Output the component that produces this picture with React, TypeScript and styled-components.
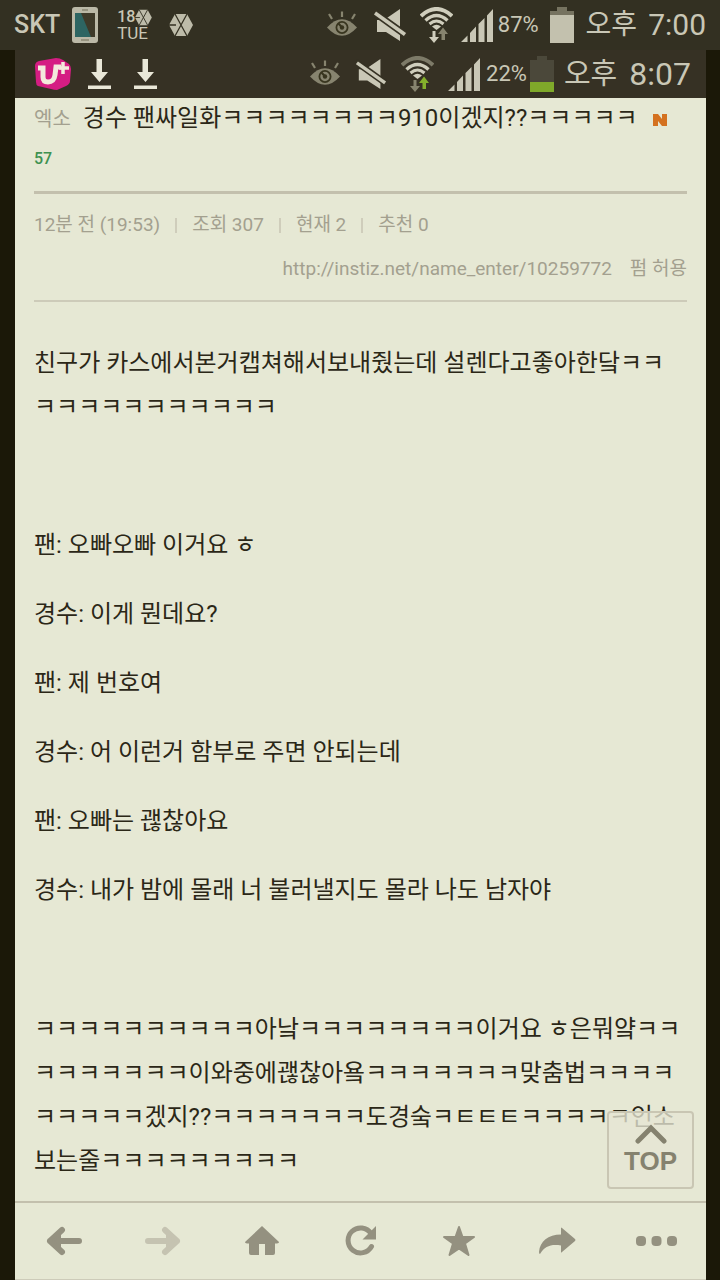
import React from "react";
import styled, { createGlobalStyle } from "styled-components";

const ink = "#2b2717";
const muted = "#a3a08f";
const rule = "#c3c0ad";
const paper = "#e6e8d4";
const iconGrey = "#949180";

const GlobalStyle = createGlobalStyle`
  *, *::before, *::after { box-sizing: border-box; }
  html { background: #1b1808; }
  body {
    margin: 0;
    font-family: Roboto, "Noto Sans CJK KR", sans-serif;
    color: ${ink};
  }
  h1, p { margin: 0; font-weight: 400; }
`;

const Screen = styled.div`
  min-height: 100vh;
  display: flex;
  flex-direction: column;
`;

const StatusBar = styled.header<{ $tone: string; $height: number }>`
  display: flex;
  align-items: center;
  justify-content: space-between;
  height: ${(p) => p.$height}px;
  background: ${(p) => p.$tone};
  color: #c9c7b6;
`;

const Cluster = styled.div`
  display: flex;
  align-items: center;
`;

const Slot = styled.span<{ $before?: number }>`
  display: flex;
  flex: none;
  margin-left: ${(p) => p.$before ?? 0}px;
`;

const Label = styled.span<{ $size: number; $before?: number; $weight?: number }>`
  flex: none;
  font-size: ${(p) => p.$size}px;
  line-height: 36px;
  font-weight: ${(p) => p.$weight ?? 400};
  margin-left: ${(p) => p.$before ?? 0}px;
  white-space: nowrap;
`;

const DateBadge = styled.div`
  display: flex;
  flex-direction: column;
  width: 35px;
  margin-left: 19px;
  font-size: 17px;
  line-height: 16px;
`;

const DateTop = styled.span`
  display: flex;
  align-items: center;
  height: 16px;
  font-size: 16px;
  font-weight: 500;
`;

const Frame = styled.div`
  flex: 1;
  display: flex;
  flex-direction: column;
  margin: 0 14px 0 15px;
  background: ${paper};
`;

const Article = styled.main`
  position: relative;
  flex: 1;
  padding: 0 19px 18px;
`;

const TitleBlock = styled.div`
  padding-bottom: 12px;
  border-bottom: 3px solid ${rule};
`;

const Title = styled.h1`
  font-size: 24px;
  line-height: 40px;
  word-break: break-all;
`;

const Category = styled.span`
  font-size: 20px;
  color: ${muted};
  margin-right: 12px;
`;

const NewMark = styled.svg`
  margin-left: 15px;
`;

const CommentCount = styled.p`
  font-size: 16px;
  line-height: 40px;
  font-weight: 500;
  color: #3f9251;
`;

const Meta = styled.div`
  padding: 9px 0;
  border-bottom: 2px solid #cdcbb9;
  font-size: 19px;
  line-height: 44px;
  color: ${muted};
`;

const MetaRow = styled.div<{ $end?: boolean }>`
  display: flex;
  align-items: center;
  justify-content: ${(p) => (p.$end ? "flex-end" : "flex-start")};
  gap: ${(p) => (p.$end ? 18 : 15)}px;
`;

const Divider = styled.span`
  width: 2px;
  height: 15px;
  background: #cfcdbb;
`;

const SourceLink = styled.a`
  color: inherit;
  text-decoration: none;
`;

const Body = styled.div`
  padding: 39px 4px 0 0;
  font-size: 24px;
  line-height: 44px;
`;

const Paragraph = styled.p`
  word-break: break-all;
`;

const Dialogue = styled.div`
  display: flex;
  flex-direction: column;
  gap: 25px;
  margin: 94px 0 95px;
`;

const TopButton = styled.button`
  position: absolute;
  right: 12px;
  bottom: 12px;
  width: 87px;
  height: 78px;
  padding: 0;
  display: flex;
  flex-direction: column;
  align-items: center;
  justify-content: center;
  gap: 2px;
  background: rgba(230, 230, 211, 0.78);
  border: 2px solid #c9c6b3;
  border-radius: 4px;
  color: #85826f;
  font: 700 26px/30px "Liberation Sans", sans-serif;
`;

const Toolbar = styled.nav`
  display: flex;
  height: 79px;
  border-top: 2px solid ${rule};
  border-bottom: 1px solid #cdcbb9;
`;

const ToolButton = styled.button<{ $faded?: boolean }>`
  flex: 1;
  display: flex;
  align-items: center;
  justify-content: center;
  padding: 0;
  border: 0;
  background: none;
  color: ${(p) => (p.$faded ? "#c5c3b1" : iconGrey)};
`;

const Eye = ({ size }: { size: number }) => (
  <svg width={size} height={size} viewBox="0 0 30 30" aria-hidden="true">
    <path d="M0 17.500Q15 1 30 17.500Q15 34 0 17.500Z" fill="#87846f" />
    <circle cx="15" cy="17.500" r="5.600" fill="#87846f" stroke="#38351f" strokeWidth="1.800" />
    <circle cx="15" cy="17.500" r="2.200" fill="#38351f" />
    <path d="M15 17.500L11.500 13.500" stroke="#38351f" strokeWidth="2" />
    <path d="M15 1.500V7M2 4L5 9M28 4L25 9" stroke="#87846f" strokeWidth="2.200" />
  </svg>
);

const Mute = ({ size }: { size: number }) => (
  <svg width={size} height={size} viewBox="0 0 33 33" aria-hidden="true">
    <path d="M3 11H10L26 0V32L12 23H3Z" fill="#c9c7b6" />
    <path d="M-1 2.500L33 26.800" stroke="#353123" strokeWidth="7" />
    <path d="M1 4L31 25.500" stroke="#c9c7b6" strokeWidth="3.600" />
  </svg>
);

const Wifi = ({ dim, down, up }: { dim: string; down: string; up: string }) => (
  <svg width="33" height="36" viewBox="0 0 33 36" fill="none" aria-hidden="true">
    <path d="M1 9Q16.500 -5 32 9" stroke={dim} strokeWidth="4" />
    <path d="M5.500 13.500Q16.500 3.500 27.500 13.500" stroke="#d0cebd" strokeWidth="3.400" />
    <path d="M9.500 17Q16.500 11 23.500 17" stroke="#d0cebd" strokeWidth="3" />
    <path d="M12 19.500Q16.500 16 21 19.500L16.500 23Z" fill="#d0cebd" />
    <path d="M12.500 24H15.500V30H19L14 36L9 30H12.500Z" fill={down} />
    <path d="M21.500 33V27H18L23 20.500L28 27H25V33Z" fill={up} />
  </svg>
);

const Signal = () => (
  <svg width="32" height="33" viewBox="0 0 32 33" fill="#c9c7b6" aria-hidden="true">
    <path d="M0 33L6.500 26.500V33ZM9 24L15 17.500V33H9ZM17.500 15L23.500 9V33H17.500ZM26 6.500L32 0V33H26Z" />
  </svg>
);

const Battery = ({ shell, fill, level }: { shell: string; fill: string; level: number }) => (
  <svg width="24" height="36" viewBox="0 0 24 36" aria-hidden="true">
    <path d="M7 0H17V4H24V36H0V4H7Z" fill={shell} />
    <rect y={36 - level} width="24" height={level} fill={fill} />
  </svg>
);

const Hexagon = ({ width, height }: { width: number; height: number }) => (
  <svg width={width} height={height} viewBox="0 0 24 24" aria-hidden="true">
    <path d="M6 1H18L24 12L18 23H6L0 12Z" fill="#bdbba9" />
    <path d="M6 1L18 23M18 1L6 23M0 12H7" stroke="#333022" strokeWidth="1.300" />
  </svg>
);

const Phone = () => (
  <svg width="26" height="36" viewBox="0 0 26 36" aria-hidden="true">
    <rect width="26" height="36" rx="3" fill="#bbb9a7" />
    <rect x="3" y="6" width="20" height="24" fill="#3e3a29" />
    <path d="M3 6H9L19 30H3Z" fill="#2d6562" />
    <path d="M10 3H16M9 33H17" stroke="#96937f" strokeWidth="2" />
  </svg>
);

const Carrier = () => (
  <svg width="36" height="32" viewBox="0 0 36 32" aria-hidden="true">
    <path d="M4 3L21 0Q25 0 28 2L34 6Q36 8 36 11L35 23Q35 26 31 28L22 32Q19 32 16 31L3 28Q1 27 1 24L0 8Q0 4 4 3Z" fill="#d51d83" />
    <path d="M3 10H8V19Q8 24 13 24Q19 24 20 17L21 9H26" fill="none" stroke="#f3e9dc" strokeWidth="5" />
    <path d="M28 4V16M24 10H34" stroke="#f3e9dc" strokeWidth="3.500" />
  </svg>
);

const Download = () => (
  <svg width="23" height="30" viewBox="0 0 23 30" fill="#e9e7d8" aria-hidden="true">
    <path d="M8.500 0H14V13H20L11.500 23L3 13H8.500ZM0 26.500H23V30H0Z" />
  </svg>
);

const Arrow = ({ forward }: { forward?: boolean }) => (
  <svg width="36" height="30" viewBox="0 0 36 30" fill="none" stroke="currentColor" strokeWidth="6" strokeLinecap="round" strokeLinejoin="round" aria-hidden="true">
    <path d={forward ? "M3 15H32M20 4L32 15L20 26" : "M33 15H4M16 4L4 15L16 26"} />
    <path d={forward ? "M22 9L29 15L22 21Z" : "M14 9L7 15L14 21Z"} strokeWidth="2" fill="currentColor" />
  </svg>
);

const Home = () => (
  <svg width="34" height="30" viewBox="0 0 34 30" fill="currentColor" aria-hidden="true">
    <path d="M17 0L34 16Q34 17.500 30 17.500V27Q30 29 28 29H20V18H14V29H6Q4 29 4 27V17.500Q0 17.500 0 16Z" />
  </svg>
);

const Reload = () => (
  <svg width="32" height="32" viewBox="0 0 32 32" aria-hidden="true">
    <path d="M26 8.500A12.500 12.500 0 1 0 26.500 21.500" fill="none" stroke="currentColor" strokeWidth="5" strokeLinecap="round" />
    <path d="M31 1V14.500H17.500Z" fill="currentColor" />
  </svg>
);

const Star = () => (
  <svg width="32" height="32" viewBox="0 0 32 32" fill="currentColor" stroke="currentColor" strokeWidth="2" strokeLinejoin="round" aria-hidden="true">
    <path d="M16 2L19.500 12H31L22 18.500L25.500 30L16 23.500L6.500 30L10 18.500L1 12H12.500Z" />
  </svg>
);

const Share = () => (
  <svg width="37" height="28" viewBox="0 0 37 28" fill="currentColor" aria-hidden="true">
    <path d="M22 1Q22 0 23 1L36 12Q37 13 36 14L23 25Q22 26 22 25V18.500C12 17 6 19 1 27Q0 27 0 25C1 14 9 7.500 22 7.500Z" />
  </svg>
);

const Dots = () => (
  <svg width="42" height="12" viewBox="0 0 42 12" fill="currentColor" aria-hidden="true">
    <rect y="1" width="10" height="10" rx="4" />
    <rect x="15.500" y="1" width="10" height="10" rx="4" />
    <rect x="31" y="1" width="10" height="10" rx="4" />
  </svg>
);

const lines = [
  "팬: 오빠오빠 이거요 ㅎ",
  "경수: 이게 뭔데요?",
  "팬: 제 번호여",
  "경수: 어 이런거 함부로 주면 안되는데",
  "팬: 오빠는 괞찮아요",
  "경수: 내가 밤에 몰래 너 불러낼지도 몰라 나도 남자야",
];

const stats = ["12분 전 (19:53)", "조회 307", "현재 2", "추천 0"];

const tools = [
  { name: "뒤로", icon: <Arrow /> },
  { name: "앞으로", icon: <Arrow forward />, faded: true },
  { name: "홈", icon: <Home /> },
  { name: "새로고침", icon: <Reload /> },
  { name: "즐겨찾기", icon: <Star /> },
  { name: "공유", icon: <Share /> },
  { name: "더보기", icon: <Dots /> },
];

export default function App() {
  return (
    <Screen>
      <GlobalStyle />
      <StatusBar $tone="#333022" $height={50}>
        <Cluster>
          <Label $size={25} $before={14} $weight={500}>SKT</Label>
          <Slot $before={12}><Phone /></Slot>
          <DateBadge>
            <DateTop>18<Hexagon width={17} height={17} /></DateTop>
            <span>TUE</span>
          </DateBadge>
          <Slot $before={17}><Hexagon width={24} height={24} /></Slot>
        </Cluster>
        <Cluster>
          <Slot><Eye size={30} /></Slot>
          <Slot $before={17}><Mute size={33} /></Slot>
          <Slot $before={13}><Wifi dim="#d0cebd" down="#d0cebd" up="#87846f" /></Slot>
          <Slot $before={8}><Signal /></Slot>
          <Label $size={22} $before={5}>87%</Label>
          <Slot $before={11}><Battery shell="#767360" fill="#c3c1ae" level={28} /></Slot>
          <Label $size={28} $before={12}>오후</Label>
          <Label $size={30} $before={11}>7:00</Label>
          <Slot $before={14} />
        </Cluster>
      </StatusBar>
      <Frame>
        <StatusBar as="div" $tone="#363124" $height={48}>
          <Cluster>
            <Slot $before={20}><Carrier /></Slot>
            <Slot $before={17}><Download /></Slot>
            <Slot $before={23}><Download /></Slot>
          </Cluster>
          <Cluster>
            <Slot><Eye size={30} /></Slot>
            <Slot $before={16}><Mute size={31} /></Slot>
            <Slot $before={14}><Wifi dim="#7d7a68" down="#87846f" up="#84b02c" /></Slot>
            <Slot $before={14}><Signal /></Slot>
            <Label $size={22} $before={6}>22%</Label>
            <Slot $before={3}><Battery shell="#4b483a" fill="#7fa92a" level={10} /></Slot>
            <Label $size={29} $before={10}>오후</Label>
            <Label $size={32} $before={12}>8:07</Label>
            <Slot $before={15} />
          </Cluster>
        </StatusBar>
        <Article>
          <TitleBlock>
            <Title>
              <Category>엑소</Category>
              경수 팬싸일화ㅋㅋㅋㅋㅋㅋㅋㅋ910이겠지??ㅋㅋㅋㅋㅋ
              <NewMark width="14" height="12" viewBox="0 0 14 12" aria-hidden="true">
                <path d="M0 0H5L9 5V0H14V12H9L5 7V12H0Z" fill="#d4711f" />
              </NewMark>
            </Title>
            <CommentCount>57</CommentCount>
          </TitleBlock>
          <Meta>
            <MetaRow>
              {stats.map((stat, i) => (
                <React.Fragment key={stat}>
                  {i > 0 && <Divider />}
                  <span>{stat}</span>
                </React.Fragment>
              ))}
            </MetaRow>
            <MetaRow $end>
              <SourceLink href="http://instiz.net/name_enter/10259772">
                http://instiz.net/name_enter/10259772
              </SourceLink>
              <span>펌 허용</span>
            </MetaRow>
          </Meta>
          <Body>
            <Paragraph>
              친구가 카스에서본거캡쳐해서보내줬는데 설렌다고좋아한닼ㅋㅋㅋㅋㅋㅋㅋㅋㅋㅋㅋㅋㅋ
            </Paragraph>
            <Dialogue>
              {lines.map((line) => (
                <p key={line}>{line}</p>
              ))}
            </Dialogue>
            <Paragraph>
              ㅋㅋㅋㅋㅋㅋㅋㅋㅋㅋ아낰ㅋㅋㅋㅋㅋㅋㅋㅋ이거요 ㅎ은뭐얔ㅋㅋㅋㅋㅋㅋㅋㅋㅋ이와중에괞찮아욬ㅋㅋㅋㅋㅋㅋㅋ맞춤법ㅋㅋㅋㅋㅋㅋㅋㅋㅋ겠지??ㅋㅋㅋㅋㅋㅋㅋ도경숰ㅋㅌㅌㅌㅋㅋㅋㅋㅋ인소보는줄ㅋㅋㅋㅋㅋㅋㅋㅋㅋ
            </Paragraph>
          </Body>
          <TopButton type="button">
            <svg width="32" height="20" viewBox="0 0 32 20" fill="none" stroke="currentColor" strokeWidth="5" strokeLinecap="round" aria-hidden="true">
              <path d="M3 17L16 4L29 17" />
            </svg>
            TOP
          </TopButton>
        </Article>
        <Toolbar>
          {tools.map((tool) => (
            <ToolButton key={tool.name} type="button" aria-label={tool.name} $faded={tool.faded}>
              {tool.icon}
            </ToolButton>
          ))}
        </Toolbar>
      </Frame>
    </Screen>
  );
}
